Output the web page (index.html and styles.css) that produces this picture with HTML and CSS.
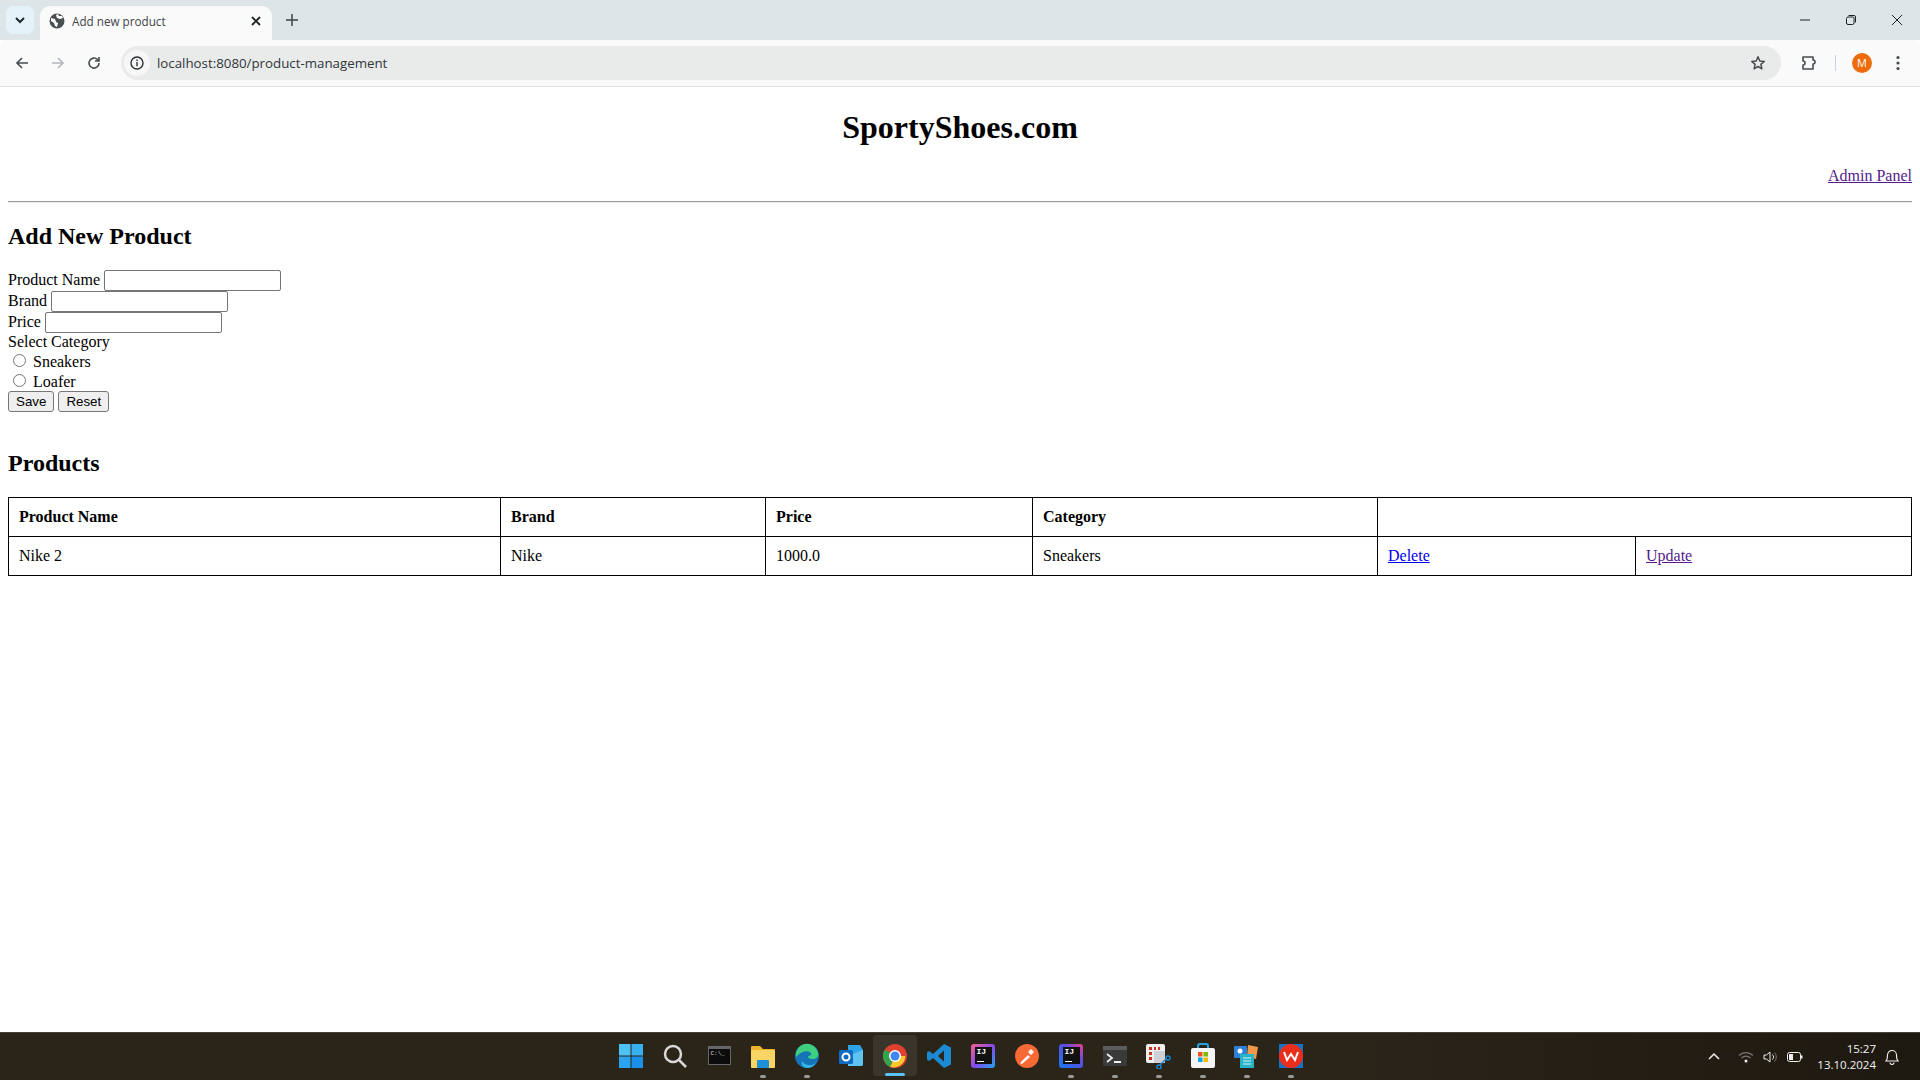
FILE: index.html
```html
<!DOCTYPE html>
<html lang="en">
<head>
    <meta charset="UTF-8">
    <title>Add new product</title>
    <link rel="stylesheet" href="styles.css">
</head>
<body>
<div class="screen">
    <header class="browser">
        <div class="tab-strip">
            <div class="tab-search">
                <svg width="12" height="12" viewBox="0 0 12 12"><path d="M2 4l4 4 4-4" fill="none" stroke="#1f2a30" stroke-width="2"/></svg>
            </div>
            <div class="tab">
                <svg width="16" height="16" viewBox="0 0 16 16"><circle cx="8" cy="8" r="7.5" fill="#4a4f52"/><path d="M2 5l4 1 1 3 2 1-1 4-2-1-1-3-3-2zM9 1l1 2 3 0 1 2-3 1-3-1-1-3z" fill="#fff"/></svg>
                <span class="tab-title">Add new product</span>
                <svg class="tab-close" width="10" height="10" viewBox="0 0 10 10"><path d="M1 1l8 8M9 1l-8 8" stroke="#1f2326" stroke-width="1.8"/></svg>
            </div>
            <svg class="new-tab" width="12" height="12" viewBox="0 0 12 12"><path d="M6 0v12M0 6h12" stroke="#3c4347" stroke-width="1.5"/></svg>
            <div class="window-btns">
                <svg width="12" height="12" viewBox="0 0 12 12"><path d="M1 6h10" stroke="#1f2326" stroke-width="1"/></svg>
                <svg width="12" height="12" viewBox="0 0 12 12"><rect x="1.5" y="3" width="7.5" height="7.5" rx="1.5" fill="none" stroke="#1f2326"/><path d="M3.5 1.5h5.5a1.5 1.5 0 0 1 1.5 1.5v5.5" fill="none" stroke="#1f2326"/></svg>
                <svg width="12" height="12" viewBox="0 0 12 12"><path d="M1 1l10 10M11 1l-10 10" stroke="#1f2326" stroke-width="1"/></svg>
            </div>
        </div>
        <div class="toolbar">
            <svg class="nav-icon" width="16" height="16" viewBox="0 0 16 16"><path d="M14 8H3M8 3L3 8l5 5" fill="none" stroke="#474c4f" stroke-width="1.6"/></svg>
            <svg class="nav-icon" width="16" height="16" viewBox="0 0 16 16"><path d="M2 8h11M8 3l5 5-5 5" fill="none" stroke="#b4b8ba" stroke-width="1.6"/></svg>
            <svg class="nav-icon" width="16" height="16" viewBox="0 0 16 16"><path d="M13 8a5 5 0 1 1-1.5-3.5L13 6M13 2v4H9" fill="none" stroke="#474c4f" stroke-width="1.6"/></svg>
            <div class="omnibox">
                <div class="site-info">
                    <svg width="16" height="16" viewBox="0 0 16 16"><circle cx="8" cy="8" r="6" fill="none" stroke="#2b2f31" stroke-width="1.4"/><path d="M8 7v4.2M8 4.6v1.4" stroke="#2b2f31" stroke-width="1.4"/></svg>
                </div>
                <span class="url">localhost:8080/product-management</span>
                <svg class="star" width="16" height="16" viewBox="0 0 16 16"><path d="M8 1.800l1.800 4.200 4.500.4-3.400 3 1 4.400L8 11.500 4.100 13.800l1-4.400-3.400-3 4.500-.4z" fill="none" stroke="#474c4f" stroke-width="1.500" stroke-linejoin="round"/></svg>
            </div>
            <svg class="ext" width="18" height="18" viewBox="0 0 18 18"><path d="M2 3h10v3a1.500 1.500 0 0 1 0 4v5H2v-4a1.800 1.800 0 0 0 0-4z" fill="none" stroke="#474c4f" stroke-width="1.600" stroke-linejoin="round"/></svg>
            <span class="toolbar-sep"></span>
            <span class="avatar">M</span>
            <svg class="menu" width="4" height="16" viewBox="0 0 4 16"><circle cx="2" cy="2.500" r="1.600" fill="#474c4f"/><circle cx="2" cy="8" r="1.600" fill="#474c4f"/><circle cx="2" cy="13.500" r="1.600" fill="#474c4f"/></svg>
        </div>
    </header>

    <main class="page">
        <h1>SportyShoes.com</h1>
        <div class="admin-link"><a href="#" class="visited">Admin Panel</a></div>
        <hr>
        <h2 class="form-title">Add New Product</h2>
        <form class="product-form">
            <label for="name">Product Name</label> <input type="text" id="name" class="text-input"><br>
            <label for="brand">Brand</label> <input type="text" id="brand" class="text-input"><br>
            <label for="price">Price</label> <input type="text" id="price" class="text-input"><br>
            <div class="line">Select Category</div>
            <div class="radio-line"><input type="radio" name="category" id="sneakers"> <label for="sneakers">Sneakers</label></div>
            <div class="radio-line"><input type="radio" name="category" id="loafer"> <label for="loafer">Loafer</label></div>
            <div class="form-btns">
                <button type="button">Save</button>
                <button type="reset">Reset</button>
            </div>
        </form>
        <h2 class="list-title">Products</h2>
        <table class="products">
            <colgroup>
                <col class="c-name"><col class="c-brand"><col class="c-price"><col class="c-cat"><col class="c-del"><col>
            </colgroup>
            <tr>
                <th>Product Name</th>
                <th>Brand</th>
                <th>Price</th>
                <th>Category</th>
                <th colspan="2"></th>
            </tr>
            <tr>
                <td>Nike 2</td>
                <td>Nike</td>
                <td>1000.0</td>
                <td>Sneakers</td>
                <td><a href="#">Delete</a></td>
                <td><a href="#" class="visited">Update</a></td>
            </tr>
        </table>
    </main>

    <footer class="taskbar">
        <div class="task-icons">
            <span class="task-icon">
                <svg width="26" height="26" viewBox="0 0 26 26"><rect x="1" y="1" width="11.500" height="11.500" fill="#4cc2f5"/><rect x="13.500" y="1" width="11.500" height="11.500" fill="#36b0f0"/><rect x="1" y="13.500" width="11.500" height="11.500" fill="#2aa4ee"/><rect x="13.500" y="13.500" width="11.500" height="11.500" fill="#1a90e8"/></svg>
            </span>
            <span class="task-icon">
                <svg width="26" height="26" viewBox="0 0 26 26"><circle cx="11" cy="11" r="8" fill="none" stroke="#d8d8d8" stroke-width="2.500"/><path d="M17 17l7 7" stroke="#d8d8d8" stroke-width="2.500"/></svg>
            </span>
            <span class="task-icon">
                <span class="cmd">C:\_</span>
            </span>
            <span class="task-icon running">
                <svg width="26" height="24" viewBox="0 0 26 24"><path d="M1 3a1 1 0 0 1 1-1h8l3 3h11a1 1 0 0 1 1 1v3H1z" fill="#eeb32c"/><rect x="1" y="6" width="24" height="18" rx="1" fill="#fbd564"/><rect x="7" y="16" width="12" height="8" rx="1" fill="#1e90d8"/></svg>
            </span>
            <span class="task-icon running">
                <svg width="26" height="26" viewBox="0 0 26 26"><circle cx="13" cy="13" r="12" fill="#1573b8"/><path d="M2 14a11 11 0 0 1 22-4c1 4-2 6-6 6-3 0-4-1-4-3 2 0 4-1 3-3-3-3-10-2-15 4z" fill="#3fd07f"/><path d="M8 18c2 4 8 6 14 2-3 5-9 6-12 4-2-1-3-4-2-6z" fill="#33b5e8"/></svg>
            </span>
            <span class="task-icon">
                <svg width="26" height="24" viewBox="0 0 26 24"><path d="M10 1h12l3 5v14a2 2 0 0 1-2 2H10z" fill="#2ea3e6"/><path d="M10 12l15-6v14a2 2 0 0 1-2 2H10z" fill="#5fc4f2"/><rect x="1" y="6" width="14" height="14" rx="1.500" fill="#0f6cc0"/><circle cx="8" cy="13" r="3.500" fill="none" stroke="#fff" stroke-width="2"/></svg>
            </span>
            <span class="task-icon active">
                <svg width="26" height="26" viewBox="0 0 26 26"><circle cx="13" cy="13" r="12" fill="#e0402f"/><path d="M13 13L2.600 19A12 12 0 0 1 3 6.400z" fill="#32a54f"/><path d="M13 13l10.400 0A12 12 0 0 1 8 24z" fill="#fbc82d"/><path d="M13 13L8 24A12 12 0 0 1 2.600 19z" fill="#32a54f"/><circle cx="13" cy="13" r="6" fill="#fff"/><circle cx="13" cy="13" r="4.500" fill="#3f86ef"/></svg>
            </span>
            <span class="task-icon">
                <svg width="26" height="26" viewBox="0 0 26 26"><path d="M18 1l7 3.500v17L18 25 7 15l-4 3-2-1.500V9.500L3 8l4 3zM18 7.500L12 13l6 5.500z" fill="#1b8ad3"/></svg>
            </span>
            <span class="task-icon">
                <span class="ij ij-multi"><span class="ij-box">IJ</span></span>
            </span>
            <span class="task-icon">
                <svg width="26" height="26" viewBox="0 0 26 26"><circle cx="13" cy="13" r="12" fill="#f76935"/><path d="M6 20l8-8 2 2-8 7zM14 9l3-3 3 3-3 3z" fill="#fff"/></svg>
            </span>
            <span class="task-icon running">
                <span class="ij ij-blue"><span class="ij-box">IJ</span></span>
            </span>
            <span class="task-icon running">
                <svg width="24" height="20" viewBox="0 0 24 20"><rect width="24" height="20" rx="1.500" fill="#3a3a3a"/><rect width="24" height="4" fill="#5c5c5c"/><path d="M4 8l5 4-5 4M11 16h7" fill="none" stroke="#eee" stroke-width="1.800"/></svg>
            </span>
            <span class="task-icon running">
                <svg width="26" height="26" viewBox="0 0 26 26"><rect x="0" y="1" width="19" height="19" rx="2" fill="#efefef"/><path d="M3 4h3v3H3zM8 4h2v3H8zM12 4h2v3h-2zM3 9h3v3H3zM3 14h3v3H3z" fill="#c8321f"/><rect x="8" y="8" width="11" height="12" fill="#cfcfd6"/><circle cx="22" cy="15" r="2" fill="none" stroke="#1a86d0" stroke-width="1.500"/><circle cx="13" cy="24" r="2" fill="none" stroke="#1a86d0" stroke-width="1.500"/><path d="M14 22l6-6" stroke="#1a86d0" stroke-width="1.500"/></svg>
            </span>
            <span class="task-icon running">
                <svg width="24" height="25" viewBox="0 0 24 25"><path d="M7 6V3a2 2 0 0 1 2-2h6a2 2 0 0 1 2 2v3" fill="none" stroke="#26a3e0" stroke-width="2"/><rect y="5" width="24" height="20" rx="2" fill="#f5f5f5"/><rect x="7" y="9" width="4.500" height="4.500" fill="#f25022"/><rect x="12.500" y="9" width="4.500" height="4.500" fill="#7fba00"/><rect x="7" y="14.500" width="4.500" height="4.500" fill="#00a4ef"/><rect x="12.500" y="14.500" width="4.500" height="4.500" fill="#ffb900"/></svg>
            </span>
            <span class="task-icon running">
                <svg width="26" height="26" viewBox="0 0 26 26"><rect x="0" y="3" width="13" height="12" rx="1" fill="#2e7fd8"/><path d="M14 2l10 2-2 12-9-2z" fill="#ef9a4a"/><circle cx="6" cy="8" r="2.500" fill="#fff"/><rect x="6" y="11" width="14" height="14" fill="#28b4c8"/><path d="M9 15h8M9 18h8M9 21h8" stroke="#d7f2f6" stroke-width="1.200"/></svg>
            </span>
            <span class="task-icon running">
                <svg width="24" height="24" viewBox="0 0 24 24"><rect width="24" height="24" fill="#1272c8"/><circle cx="12" cy="12" r="12" fill="#ea2e1c"/><path d="M5 8l3 8 4-6 4 6 3-8" fill="none" stroke="#fff" stroke-width="2"/></svg>
            </span>
        </div>
        <div class="tray">
            <svg class="tray-up" width="12" height="12" viewBox="0 0 12 12"><path d="M1 8l5-5 5 5" fill="none" stroke="#eee" stroke-width="1.500"/></svg>
            <svg class="tray-wifi" width="16" height="12" viewBox="0 0 16 12"><path d="M1 4.500a10 10 0 0 1 14 0M3.500 7a6.500 6.500 0 0 1 9 0" fill="none" stroke="#777" stroke-width="1.200"/><circle cx="8" cy="10" r="1.500" fill="#eee"/></svg>
            <svg class="tray-vol" width="16" height="14" viewBox="0 0 16 14"><path d="M1 5h2.500L7 2v10L3.500 9H1z" fill="none" stroke="#eee"/><path d="M9.500 4.500a3.500 3.500 0 0 1 0 5" fill="none" stroke="#ddd"/><path d="M11.500 2.500a6.500 6.500 0 0 1 0 9" fill="none" stroke="#777"/></svg>
            <svg class="tray-bat" width="16" height="10" viewBox="0 0 16 10"><rect x=".5" y=".5" width="13" height="9" rx="2" fill="none" stroke="#eee"/><rect x="2" y="2" width="4" height="6" fill="#eee"/><rect x="14" y="3.500" width="1.500" height="3" fill="#eee"/></svg>
            <div class="clock">
                <div>15:27</div>
                <div>13.10.2024</div>
            </div>
            <svg class="bell" width="14" height="16" viewBox="0 0 14 16"><path d="M1 12c1.500-1.500 1.500-3 1.500-6a4.500 4.500 0 0 1 9 0c0 3 0 4.500 1.500 6zM5 13.500a2 2 0 0 0 4 0" fill="none" stroke="#eee" stroke-width="1.100"/></svg>
        </div>
    </footer>
</div>
</body>
</html>
```

FILE: styles.css
```css
* {
    box-sizing: border-box;
}

html, body {
    margin: 0;
    padding: 0;
    height: 100%;
}

.screen {
    height: 1080px;
    display: flex;
    flex-direction: column;
    overflow: hidden;
    background: white;
}

/* browser chrome */
.browser {
    font-family: "Open Sans", "Noto Sans", sans-serif;
    flex: none;
}

.tab-strip {
    height: 40px;
    background: #dee5e8;
    display: flex;
    align-items: center;
    padding-left: 6px;
}

.tab-search {
    width: 28px;
    height: 28px;
    border-radius: 8px;
    background: #e3f3f9;
    display: flex;
    align-items: center;
    justify-content: center;
}

.tab {
    width: 232px;
    height: 34px;
    margin-top: 6px;
    margin-left: 6px;
    background: #fafafb;
    border-radius: 10px 10px 0 0;
    display: flex;
    align-items: center;
    padding: 0 11px 5px 9px;
}

.tab-title {
    font-size: 11.700px;
    color: #3f4447;
    margin-left: 7px;
    flex: 1;
}

.new-tab {
    margin-left: 14px;
}

.window-btns {
    margin-left: auto;
    display: flex;
    gap: 34px;
    padding-right: 17px;
}

.toolbar {
    height: 47px;
    background: #fafafb;
    border-bottom: 1px solid #dfe1e3;
    border-radius: 8px 8px 0 0;
    display: flex;
    align-items: center;
    padding-left: 14px;
}

.nav-icon {
    margin-right: 20px;
}

.nav-icon:nth-child(3) {
    margin-right: 19px;
}

.omnibox {
    width: 1660px;
    height: 34px;
    background: #e9ebea;
    border-radius: 17px;
    display: flex;
    align-items: center;
    padding-left: 3px;
    padding-right: 15px;
}

.site-info {
    width: 26px;
    height: 26px;
    border-radius: 50%;
    background: #f7f7f8;
    display: flex;
    align-items: center;
    justify-content: center;
}

.url {
    font-size: 13.300px;
    color: #30363a;
    margin-left: 7px;
    flex: 1;
}

.ext {
    margin-left: 20px;
}

.toolbar-sep {
    width: 1px;
    height: 16px;
    background: #c4d6de;
    margin-left: 16px;
}

.avatar {
    width: 20px;
    height: 20px;
    border-radius: 50%;
    background: #ee6c0c;
    color: #fff;
    font-size: 11px;
    text-align: center;
    line-height: 20px;
    margin-left: 16px;
}

.menu {
    margin-left: 24px;
}

/* the actual page */
.page {
    flex: 1;
    padding: 0 8px;
    font-family: "Liberation Serif", serif;
    font-size: 16px;
    color: black;
}

a {
    color: #0000ee;
}

a.visited {
    color: #551a8b;
}

h1 {
    text-align: center;
    font-size: 32px;
    margin: 22px 0 0;
    line-height: 36px;
}

.admin-link {
    text-align: right;
    margin-top: 22px;
    line-height: 18px;
}

hr {
    margin: 16px 0 0;
    border: none;
    border-top: 1px solid #9a9a9a;
    border-bottom: 1px solid #eeeeee;
}

.form-title {
    font-size: 24px;
    margin: 20px 0 0;
    line-height: 27px;
}

.product-form {
    margin-top: 20px;
}

.text-input {
    width: 177px;
    height: 21px;
    font-size: 13px;
    vertical-align: baseline;
    border: 1px solid #767676;
    border-radius: 2px;
}

.radio-line {
    padding-left: 5px;
    height: 20px;
    line-height: 20px;
}

.line + .radio-line {
    margin-top: 1px;
}

.radio-line input {
    margin: 0 3px 0 0;
}

.form-btns {
    height: 20px;
    margin-top: -1px;
}

.form-btns button {
    font-family: "Liberation Sans", sans-serif;
    font-size: 13.333px;
    background: #efefef;
    border: 1px solid #767676;
    border-radius: 3px;
    padding: 2px 7px;
}

.list-title {
    font-size: 24px;
    margin: 39px 0 0;
    line-height: 27px;
}

.products {
    width: 100%;
    margin-top: 20px;
    border-collapse: collapse;
    table-layout: fixed;
}

.products th, .products td {
    border: 1px solid black;
    padding: 10px;
    text-align: left;
    height: 39px;
}

.c-name { width: 492px; }
.c-brand { width: 265px; }
.c-price { width: 267px; }
.c-cat { width: 345px; }
.c-del { width: 258px; }

/* windows taskbar */
.taskbar {
    flex: none;
    height: 48px;
    background: linear-gradient(90deg, #2a2419 70%, #1e1910);
    border-top: 1px solid #46423a;
    display: flex;
    align-items: center;
    position: relative;
    font-family: "Open Sans", "Noto Sans", sans-serif;
}

.task-icons {
    position: absolute;
    left: 609px;
    top: -1px;
    display: flex;
    height: 47px;
}

.task-icon {
    width: 44px;
    height: 47px;
    display: flex;
    align-items: center;
    justify-content: center;
    position: relative;
}

.task-icon.running::after, .task-icon.active::after {
    content: "";
    position: absolute;
    left: 19px;
    bottom: 1px;
    width: 6px;
    height: 3px;
    border-radius: 2px;
    background: #9a9a96;
}

.task-icon.active {
    background: #3a352b;
    border-radius: 4px;
    height: 41px;
    margin-top: 3px;
}

.task-icon.active::after {
    left: 12px;
    width: 20px;
    bottom: 0;
    background: #5cc1f5;
}

.cmd {
    width: 23px;
    height: 19px;
    background: #0c0c0c;
    border: 1px solid #666;
    border-top-width: 3px;
    color: #ddd;
    font-family: "Liberation Mono", monospace;
    font-size: 6px;
    line-height: 10px;
    padding-left: 2px;
}

.ij {
    width: 24px;
    height: 24px;
    display: flex;
    align-items: center;
    justify-content: center;
    border-radius: 3px;
}

.ij-multi {
    background: linear-gradient(135deg, #fb5e8f, #7b4cf0 55%, #1ea7f0);
}

.ij-blue {
    background: linear-gradient(45deg, #1578f0, #5a4ee0 60%, #f0408c);
}

.ij-box {
    width: 17px;
    height: 17px;
    background: #111;
    color: #fff;
    font-family: "Liberation Mono", monospace;
    font-size: 8px;
    font-weight: 700;
    line-height: 10px;
    padding-left: 2px;
    position: relative;
}

.ij-box::after {
    content: "";
    position: absolute;
    left: 2px;
    bottom: 2px;
    width: 7px;
    height: 1px;
    background: #fff;
}

.tray {
    margin-left: auto;
    display: flex;
    align-items: center;
    color: #f2f2f2;
    padding-right: 16px;
}

.tray-wifi {
    margin-left: 18px;
}

.tray-vol {
    margin-left: 9px;
}

.tray-bat {
    margin-left: 8px;
}

.clock {
    font-size: 11.500px;
    line-height: 16px;
    text-align: right;
    margin-left: 14px;
}

.bell {
    margin-left: 9px;
    margin-right: 5px;
}
```
